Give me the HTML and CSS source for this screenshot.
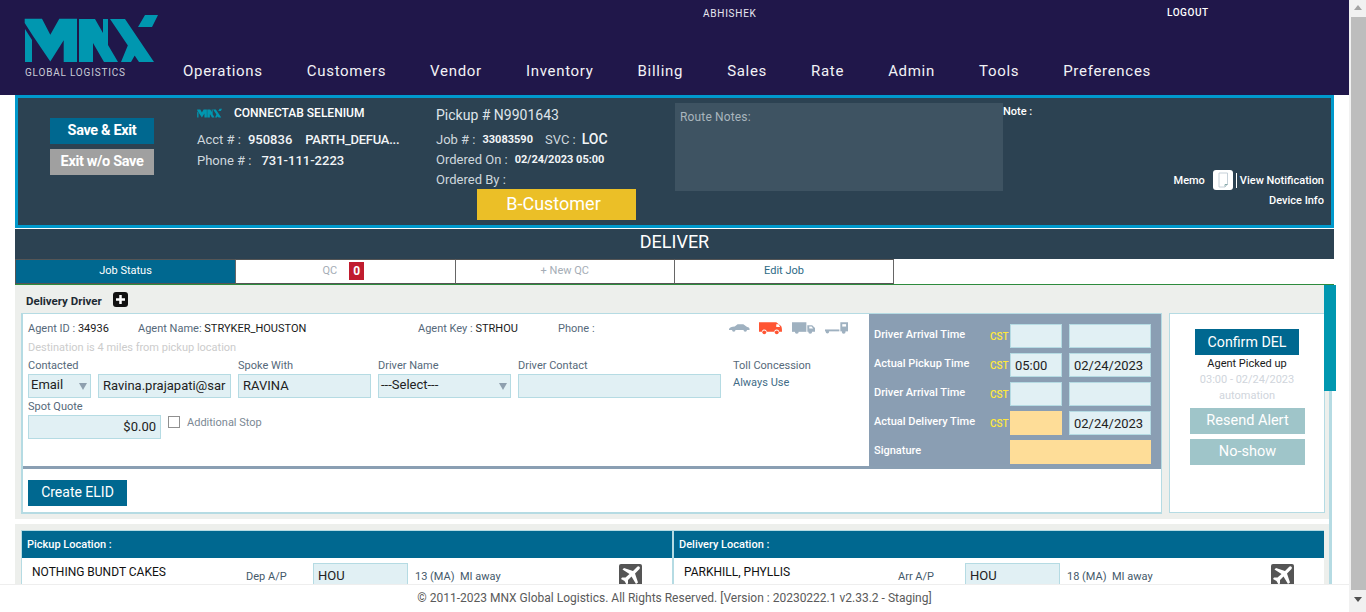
FILE: index.html
```html
<!DOCTYPE html>
<html lang="en">
<head>
<meta charset="utf-8">
<title>MNX Global Logistics</title>
<link rel="stylesheet" href="styles.css">
</head>
<body>
<div class="window">
  <div class="page">
    <header class="topbar">
      <div class="brand">
        <svg class="logo" viewBox="0 0 134 48" aria-hidden="true">
          <path d="M1 15L8 26V48H1Z M.7 4.700H18L26.300 20.700 35.300 4.700H53V48H39.700V26.300L26.300 47.500 9 22 .7 9Z" fill="#0097b0"/>
          <path d="M55 5H71L79 19V5H84V31L94 48H80L69 29V48H55Z" fill="#0097b0"/>
          <path d="M86 5H101L130 48H115Z M121 1H134L128 13H114Z M104 31L111 41 107 48H97Z" fill="#0097b0"/>
        </svg>
        <div class="tagline">GLOBAL LOGISTICS</div>
      </div>
      <div class="top-right">
        <div class="user-row"><span class="user">ABHISHEK</span><span class="logout">LOGOUT</span></div>
        <nav class="nav">
          <a>Operations</a><a>Customers</a><a>Vendor</a><a>Inventory</a><a>Billing</a><a>Sales</a><a>Rate</a><a>Admin</a><a>Tools</a><a>Preferences</a>
        </nav>
      </div>
    </header>

    <div class="scroll">
      <section class="summary">
        <div class="sum-actions">
          <div class="btn btn-save">Save &amp; Exit</div>
          <div class="btn btn-exit">Exit w/o Save</div>
        </div>
        <div class="sum-customer">
          <div class="cust-head">
            <svg class="mini-logo" viewBox="0 0 134 48" aria-hidden="true">
              <path d="M1 15L8 26V48H1Z M.7 4.700H18L26.300 20.700 35.300 4.700H53V48H39.700V26.300L26.300 47.500 9 22 .7 9Z" fill="#0097b0"/>
              <path d="M55 5H71L79 19V5H84V31L94 48H80L69 29V48H55Z" fill="#0097b0"/>
              <path d="M86 5H101L130 48H115Z M121 1H134L128 13H114Z M104 31L111 41 107 48H97Z" fill="#0097b0"/>
            </svg>
            <span class="cust-name">CONNECTAB SELENIUM</span>
          </div>
          <div class="sum-line acct"><span>Acct # :</span><b class="v1">950836</b><b class="v2">PARTH_DEFUA...</b></div>
          <div class="sum-line phone"><span>Phone # :</span><b class="v3">731-111-2223</b></div>
        </div>
        <div class="sum-job">
          <div class="pickup">Pickup # N9901643</div>
          <div class="sum-line job"><span>Job # :</span><b class="small">33083590</b><span class="svc">SVC :</span><b class="loc">LOC</b></div>
          <div class="sum-line ordered"><span>Ordered On :</span><b class="small">02/24/2023 05:00</b></div>
          <div class="sum-line ordered"><span>Ordered By :</span></div>
          <div class="customer-type">B-Customer</div>
        </div>
        <div class="route-notes">Route Notes:</div>
        <div class="sum-notes">
          <div class="note-label">Note :</div>
          <div class="memo-row">
            <span>Memo</span>
            <span class="memo-icon"><svg viewBox="0 0 20 20" aria-hidden="true"><path d="M6 3H14.500V14.500L12 17H6Z" fill="#fff" stroke="#c5d0d8"/><path d="M12 16.500V14.500H14.500" fill="none" stroke="#8aa"/></svg></span>
            <span class="memo-sep">View Notification</span>
          </div>
          <div class="device">Device Info</div>
        </div>
      </section>

      <h1 class="status-title">DELIVER</h1>
      <div class="tabs">
        <div class="tab tab-on">Job Status</div>
        <div class="tab tab-muted tab-qc">QC<span class="qc-badge">0</span></div>
        <div class="tab tab-muted">+ New QC</div>
        <div class="tab tab-edit">Edit Job</div>
      </div>

      <div class="body-wrap">
        <div class="inner-scroll"><div class="inner-thumb"></div></div>
        <section class="driver">
          <div class="driver-head">
            <span>Delivery Driver</span>
            <span class="plus"><svg viewBox="0 0 15 15" aria-hidden="true"><rect width="15" height="15" rx="3" fill="#111"/><path d="M7.500 3V12M3 7.500H12" stroke="#fff" stroke-width="2.500"/></svg></span>
          </div>
          <div class="driver-main">
            <div class="driver-box">
              <div class="driver-top">
                <div class="form">
                  <div class="agent-row">
                    <span class="a-id">Agent ID : <i>34936</i></span>
                    <span class="a-name">Agent Name: <i>STRYKER_HOUSTON</i></span>
                    <span class="a-key">Agent Key : <i>STRHOU</i></span>
                    <span class="a-phone">Phone :</span>
                    <span class="vehicles">
                      <svg class="car" width="21" height="10" viewBox="0 0 22 10" aria-hidden="true"><path d="M0 6Q1 4 6 3.500L9 1H15L19 4Q22 4.500 21.500 7H0Z" fill="#9fb1c0"/><circle cx="5" cy="7" r="1.800" fill="#9fb1c0"/><circle cx="17" cy="7" r="1.800" fill="#9fb1c0"/></svg>
                      <svg width="23" height="14" viewBox="0 0 24 14" aria-hidden="true"><path d="M0 1H18L23 5Q24 6 24 11H21A2.500 2.500 0 0 0 16 11H8A2.500 2.500 0 0 0 3 11H0Z" fill="#ff5533"/><path d="M18 3H20.500L22 6H18Z" fill="#fff"/><circle cx="5.500" cy="11.500" r="2" fill="#ff5533"/><circle cx="18.500" cy="11.500" r="2" fill="#ff5533"/></svg>
                      <svg width="23" height="12" viewBox="0 0 24 12" aria-hidden="true"><path d="M0 0H15V10H0Z" fill="#9fb1c0"/><path d="M16 3H21L24 6V10H16Z" fill="#9fb1c0"/><path d="M18 4.500H20.500L22 6.500H18Z" fill="#fff"/><circle cx="5" cy="10" r="2" fill="#9fb1c0"/><circle cx="19" cy="10" r="2" fill="#9fb1c0"/></svg>
                      <svg width="23" height="12" viewBox="0 0 24 12" aria-hidden="true"><path d="M0 7.500H15V9.500H0Z" fill="#9fb1c0"/><path d="M16 0H24V9.500H16Z" fill="#9fb1c0"/><path d="M18 2H22V4.500H18Z" fill="#fff"/><circle cx="2.500" cy="10" r="1.800" fill="#9fb1c0"/><circle cx="19.500" cy="10" r="2" fill="#9fb1c0"/></svg>
                    </span>
                  </div>
                  <div class="distance">Destination is 4 miles from pickup location</div>
                  <div class="fields">
                    <div class="col w63">
                      <label class="lbl">Contacted</label>
                      <div class="field select">Email</div>
                    </div>
                    <div class="col w133">
                      <label class="lbl">&nbsp;</label>
                      <div class="field">Ravina.prajapati@sar</div>
                    </div>
                    <div class="col w133">
                      <label class="lbl">Spoke With</label>
                      <div class="field">RAVINA</div>
                    </div>
                    <div class="col w133">
                      <label class="lbl">Driver Name</label>
                      <div class="field select">---Select---</div>
                    </div>
                    <div class="col w203">
                      <label class="lbl">Driver Contact</label>
                      <div class="field"></div>
                    </div>
                    <div class="col toll">
                      <label class="lbl">Toll Concession</label>
                      <div class="always">Always Use</div>
                    </div>
                  </div>
                  <div class="quote-row">
                    <div class="col w133">
                      <label class="lbl quote-lbl">Spot Quote</label>
                      <div class="field right">$0.00</div>
                    </div>
                    <div class="stop"><span class="check"></span><span>Additional Stop</span></div>
                  </div>
                </div>
                <div class="times">
                  <div class="t-row"><span class="t-label">Driver Arrival Time</span><span class="cst">CST</span><div class="field t1"></div><div class="field t2"></div></div>
                  <div class="t-row"><span class="t-label">Actual Pickup Time</span><span class="cst">CST</span><div class="field t1">05:00</div><div class="field t2">02/24/2023</div></div>
                  <div class="t-row"><span class="t-label">Driver Arrival Time</span><span class="cst">CST</span><div class="field t1"></div><div class="field t2"></div></div>
                  <div class="t-row"><span class="t-label">Actual Delivery Time</span><span class="cst">CST</span><div class="field t1 req"></div><div class="field t2">02/24/2023</div></div>
                  <div class="t-row"><span class="t-label sig">Signature</span><div class="field req sig-field"></div></div>
                </div>
              </div>
              <div class="elid-row"><div class="btn btn-elid">Create ELID</div></div>
            </div>
            <aside class="confirm">
              <div class="btn btn-confirm">Confirm DEL</div>
              <div class="picked">Agent Picked up</div>
              <div class="faint">03:00 - 02/24/2023</div>
              <div class="faint">automation</div>
              <div class="btn btn-soft">Resend Alert</div>
              <div class="btn btn-soft">No-show</div>
            </aside>
          </div>
        </section>

        <section class="locations">
          <div class="loc-card">
            <div class="loc-col">
              <div class="loc-head">Pickup Location :</div>
              <div class="loc-body">
                <div class="loc-name">NOTHING BUNDT CAKES</div>
                <div class="loc-ap">Dep A/P</div>
                <div class="field ap-field">HOU</div>
                <div class="loc-mi">13 (MA)</div><div class="loc-away">MI away</div>
                <svg class="plane" viewBox="0 0 23 23" aria-hidden="true"><rect width="23" height="23" rx="2" fill="#555"/><path d="M20 2.500Q21.500 3 20.500 5L16 9.500 19 18.500 17 20 12.500 12.500 9 16V19.500L7.500 20.500 5.500 17 2 15 3 13.500H6.500L10.500 10 3.500 5.500 5 4 14 7 18 3Q19 2 20 2.500Z" fill="#fff"/></svg>
              </div>
            </div>
            <div class="loc-col loc-right">
              <div class="loc-head">Delivery Location :</div>
              <div class="loc-body">
                <div class="loc-name">PARKHILL, PHYLLIS</div>
                <div class="loc-ap">Arr A/P</div>
                <div class="field ap-field">HOU</div>
                <div class="loc-mi">18 (MA)</div><div class="loc-away">MI away</div>
                <svg class="plane" viewBox="0 0 23 23" aria-hidden="true"><rect width="23" height="23" rx="2" fill="#555"/><path d="M20 2.500Q21.500 3 20.500 5L16 9.500 19 18.500 17 20 12.500 12.500 9 16V19.500L7.500 20.500 5.500 17 2 15 3 13.500H6.500L10.500 10 3.500 5.500 5 4 14 7 18 3Q19 2 20 2.500Z" fill="#fff"/></svg>
              </div>
            </div>
          </div>
        </section>
      </div>
    </div>

    <footer class="footer">© 2011-2023 MNX Global Logistics. All Rights Reserved. [Version : 20230222.1 v2.33.2 - Staging]</footer>
  </div>
  <div class="scrollbar">
    <span class="arrow-up"></span>
    <div class="scroll-thumb"></div>
    <span class="arrow-down"></span>
  </div>
</div>
</body>
</html>
```
FILE: styles.css
```css
* { box-sizing: border-box; }
html, body { margin: 0; height: 612px; overflow: hidden; background: #fff; }
body { font-family: Roboto, "Liberation Sans", sans-serif; font-size: 11px; color: #56697a; }
.window { display: flex; width: 1366px; height: 612px; }
.page { width: 1349px; height: 612px; display: flex; flex-direction: column; }

/* scrollbar */
.scrollbar { width: 17px; height: 612px; background: #f1f1f1; display: flex; flex-direction: column; align-items: flex-end; }
.scroll-thumb { width: 15px; height: 573px; background: #bdbdbd; margin: 2px 0; }
.arrow-up, .arrow-down { width: 15px; height: 15px; position: relative; flex: none; }
.arrow-up::after, .arrow-down::after { content: ""; position: absolute; left: 3px; border-left: 4.5px solid transparent; border-right: 4.5px solid transparent; }
.arrow-up::after { top: 5px; border-bottom: 5px solid #a3a3a3; }
.arrow-down::after { top: 5px; border-top: 5px solid #505050; }

/* header */
.topbar { height: 95px; flex: none; background: #20174a; display: flex; }
.brand { width: 183px; padding: 14px 0 0 24px; flex: none; }
.logo { display: block; width: 134px; height: 48px; }
.tagline { margin: 5px 0 0 1px; font-size: 10px; line-height: 12px; letter-spacing: 0.8px; color: #c9cbd6; white-space: nowrap; }
.top-right { flex: 1; }
.user-row { height: 52px; padding-top: 7px; display: flex; font-size: 10px; line-height: 12px; color: #e8e8f0; }
.user { margin-left: 520px; width: 464px; letter-spacing: 0.75px; position: relative; top: 1px; }
.logout { font-weight: 500; color: #fff; letter-spacing: 0.55px; }
.nav { display: flex; gap: 44px; height: 38px; line-height: 38px; }
.nav a { font-size: 15px; letter-spacing: 0.7px; color: #f2f2f6; white-space: nowrap; }

/* scrolling region */
.scroll { flex: 1; min-height: 0; overflow: hidden; padding-left: 15px; }

/* summary */
.summary { width: 1319px; height: 133px; background: #2c4252; border: 3px solid #0099cc; display: grid; grid-template-columns: 179px 239px 239px 328px 1fr; color: #cfd8de; }
.sum-actions { padding: 20px 0 0 32px; display: flex; flex-direction: column; gap: 5px; }
.btn { display: flex; align-items: center; justify-content: center; color: #fff; white-space: nowrap; }
.btn-save, .btn-exit { width: 104px; height: 26px; padding-bottom: 2px; font-size: 14.500px; font-weight: 700; letter-spacing: -0.35px; }
.btn-save { background: #006890; }
.btn-exit { background: #a0a0a0; }
.sum-customer { padding-top: 7px; }
.cust-head { display: flex; align-items: center; height: 16px; }
.mini-logo { width: 25px; height: 10px; margin-right: 12px; }
.cust-name { font-size: 12px; font-weight: 500; color: #fff; }
.sum-line { display: flex; align-items: center; font-size: 13px; white-space: nowrap; }
.sum-line b { font-weight: 500; color: #f2f5f7; }
.acct { margin-top: 8px; height: 20px; }
.phone { margin-top: 1px; height: 20px; }
.v1 { margin-left: 7px; }
.v2 { margin-left: 13px; letter-spacing: -0.25px; }
.v3 { margin-left: 10px; }
.sum-job { padding-top: 8px; }
.pickup { font-size: 14px; line-height: 18px; color: #dfe5ea; }
.job { margin-top: 5px; height: 20px; }
.ordered { height: 20px; }
.sum-line b.small { font-size: 11px; font-weight: 700; margin-left: 7px; }
.svc { margin-left: 12px; }
.sum-line b.loc { font-size: 14px; margin-left: 6px; }
.customer-type { width: 159px; height: 31px; margin: 0 0 0 41px; padding: 0 6px 3px 0; background: #ebbf27; color: #fff; font-size: 18px; font-weight: 400; display: flex; align-items: center; justify-content: center; }
.route-notes { width: 328px; height: 88px; margin-top: 5px; padding: 7px 5px; background: #3e5362; color: #a9b5bd; font-size: 12px; line-height: 15px; letter-spacing: 0.15px; }
.sum-notes { display: flex; flex-direction: column; align-items: flex-end; padding: 7px 7px 0 0; color: #fff; font-size: 11px; font-weight: 500; }
.note-label { align-self: flex-start; line-height: 14px; }
.memo-row { display: flex; align-items: center; margin-top: 51px; height: 20px; white-space: nowrap; }
.memo-icon { width: 20px; height: 20px; margin: 0 3px 0 8px; background: #fff; border-radius: 3px; display: block; }
.memo-icon svg { display: block; width: 20px; height: 20px; }
.memo-sep { border-left: 1px solid #fff; padding-left: 3px; line-height: 15px; }
.device { margin-top: 3px; line-height: 15px; }

/* status */
.status-title { margin: 1px 0 0; width: 1319px; height: 30px; background: #2c4252; color: #fff; font-size: 18px; font-weight: 400; line-height: 26px; text-align: center; }
.tabs { display: flex; height: 25px; width: 1319px; }
.tab { width: 219.500px; padding-bottom: 2px; border-top: 1px solid #555; border-bottom: 1px solid #555; border-right: 1px solid #666; background: #fff; display: flex; align-items: center; justify-content: center; font-size: 11px; }
.tab-on { width: 221px; background: #006890; color: #fff; border-left: 1px solid #555; }
.tab-muted { color: #a5adb6; }
.tab-qc { padding-right: 4px; }
.tab-edit { width: 219px; color: #2d6a85; }
.qc-badge { width: 15px; height: 18px; margin-left: 12px; background: #c01c2e; color: #fff; font-weight: 700; font-size: 12px; line-height: 18px; text-align: center; }

/* body */
.body-wrap { width: 1319px; position: relative; border-top: 1px solid #2e8b3d; }
.inner-scroll { position: absolute; right: -2px; top: 0; width: 12px; height: 320px; }
.inner-scroll::after { content: ""; position: absolute; left: 5px; top: 0; width: 3px; height: 320px; background: #b5dbe3; }
.inner-thumb { position: relative; z-index: 1; width: 12px; height: 106px; background: #0097b0; }
.driver { width: 1314px; height: 234px; background: #edefec; padding: 0 0 0 6px; }
.driver-head { height: 28px; display: flex; align-items: center; gap: 11px; padding-left: 5px; padding-top: 4px; color: #1d2a33; font-size: 11.500px; font-weight: 700; }
.plus { width: 15px; height: 15px; display: block; margin-top: -3px; }
.plus svg { display: block; }
.driver-main { display: flex; gap: 7px; align-items: flex-start; }
.driver-box { width: 1141px; height: 201px; background: #fff; border: solid #b5dbe3; border-width: 1px 1px 2px 2px; }
.driver-top { height: 155px; display: flex; border-bottom: 3px solid #8a9fb3; }
.form { width: 846px; padding-left: 5px; }
.agent-row { height: 24px; padding-top: 4px; display: flex; align-items: center; line-height: 15px; }
.agent-row i { font-style: normal; color: #1a1a1a; }
.a-id { width: 110px; }
.a-name { width: 280px; }
.a-key { width: 140px; }
.a-phone { width: 171px; }
.vehicles { display: flex; align-items: center; gap: 10px; }
.car { margin-right: -1px; }
.distance { height: 20px; line-height: 20px; color: #ccc; }
.fields { display: flex; gap: 7px; }
.col { display: flex; flex-direction: column; }
.w63 { width: 63px; }
.w133 { width: 133px; }
.w203 { width: 203px; }
.toll { margin-left: 5px; }
.lbl { display: block; height: 16px; line-height: 16px; color: #56697a; white-space: nowrap; }
.field { height: 24px; background: #e1f0f4; border: 1px solid #b5dbe3; padding: 0 4px; font-size: 13px; font-weight: 400; line-height: 22px; color: #222; overflow: hidden; white-space: nowrap; flex: none; }
.select { position: relative; padding: 0 2px; line-height: 19px; }
.select::after { content: ""; position: absolute; right: 3px; top: 8px; border-left: 4px solid transparent; border-right: 4px solid transparent; border-top: 7px solid #8e9fae; }
.always { margin-top: 1px; line-height: 15px; color: #3f6d87; }
.quote-row { display: flex; gap: 7px; margin-top: 1px; }
.quote-lbl { height: 16px; }
.right { text-align: right; }
.stop { display: flex; align-items: center; gap: 7px; height: 14px; margin-top: 16px; color: #7b8894; }
.check { width: 12px; height: 12px; background: #fff; border: 1px solid #909090; display: block; }
.times { flex: 1; background: #8a9eb3; padding: 10px 10px 0 5px; }
.t-row { display: flex; align-items: center; height: 24px; margin-bottom: 5px; color: #fff; font-weight: 500; font-size: 11px; }
.t-label { width: 116px; white-space: nowrap; padding-bottom: 4px; }
.t-label.sig { width: 136px; }
.t-row .field { line-height: 24px; }
.cst { width: 20px; color: #ffe83c; font-size: 10px; line-height: 12px; position: relative; top: 1px; }
.t1 { width: 52px; }
.t2 { width: 82px; margin-left: 7px; }
.req { background: #fedd98; border-color: #fedd98; }
.sig-field { width: 141px; }
.elid-row { padding: 11px 0 0 5px; }
.btn-elid { width: 99px; height: 26px; padding-bottom: 2px; background: #006890; font-size: 14px; }
.confirm { width: 156px; height: 200px; background: #fff; border: 1px solid #b5dbe3; display: flex; flex-direction: column; align-items: center; padding-top: 15px; }
.btn-confirm { width: 104px; height: 26px; background: #006890; font-size: 14.200px; }
.picked { margin-top: 1px; line-height: 16px; color: #1a1a1a; }
.faint { line-height: 16px; color: #d0d5dc; }
.btn-soft { width: 115px; height: 26px; background: #9fc5c9; font-size: 14.500px; margin: 0 0 5px 1px; padding-bottom: 2px; }
.confirm .faint + .btn-soft { margin-top: 4px; }

/* locations */
.locations { width: 1314px; height: 70px; margin-top: 5px; background: #edefec; padding: 6px 0 0 6px; }
.loc-card { display: flex; width: 1303px; height: 64px; background: #fff; border-left: 1px solid #b5dbe3; border-top: 1px solid #b5dbe3; }
.loc-col { width: 650px; flex: none; }
.loc-right { width: auto; flex: 1; border-left: 2px solid #b5dbe3; }
.loc-head { height: 27px; background: #006890; color: #fff; font-size: 11px; font-weight: 500; line-height: 27px; padding-left: 5px; }
.loc-body { display: flex; align-items: flex-start; padding: 5px 0 0 10px; color: #44596a; }
.loc-name { width: 214px; font-size: 12px; line-height: 18px; color: #111; }
.loc-ap { width: 67px; line-height: 15px; padding-top: 6px; }
.ap-field { width: 95px; height: 24px; line-height: 23px; }
.loc-mi { margin-left: 7px; width: 45px; padding-top: 6px; line-height: 15px; }
.loc-away { width: 159px; padding-top: 6px; line-height: 15px; }
.plane { width: 23px; height: 23px; flex: none; margin-top: 1px; }

/* footer */
.footer { height: 28px; flex: none; border-top: 1px solid #eee; background: #fff; color: #5a5a5a; font-size: 12px; line-height: 27px; text-align: center; }
```
